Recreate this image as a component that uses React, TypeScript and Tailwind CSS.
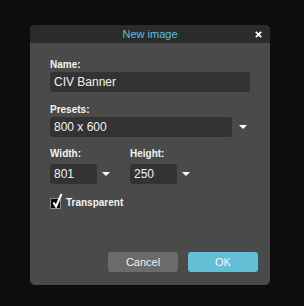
import React from 'react'

const font = { fontFamily: '"Liberation Sans", Arial, sans-serif' }

const Arrow: React.FC<{ className?: string }> = ({ className }) => (
  <svg width="8" height="4" viewBox="0 0 8 4" className={className}>
    <path d="M0 0 H8 L4 4 Z" fill="#ffffff" />
  </svg>
)

const Field: React.FC<{ value: string; className?: string }> = ({ value, className }) => (
  <div className={`h-[20px] rounded-[3px] bg-[#333333] pl-[4px] text-[12px] leading-[20px] text-[#f2f2f2] ${className ?? ''}`}>
    {value}
  </div>
)

const Label: React.FC<{ children: React.ReactNode; className?: string }> = ({ children, className }) => (
  <div className={`text-[10px] font-bold leading-[12px] text-[#f4f4f4] ${className ?? ''}`}>{children}</div>
)

const App: React.FC = () => {
  return (
    <div className="h-[306px] w-[304px] bg-[#0e0e0e] pl-[30px] pt-[25px]" style={font}>
      <div className="flex h-[260px] w-[240px] flex-col overflow-hidden rounded-[5px] bg-[#4a4a4a]">
        <div className="relative flex h-[18px] items-center justify-center bg-[#2b2b2b]">
          <span className="text-[11px] leading-[18px] text-[#5bc0de]">New image</span>
          <svg width="7" height="7" viewBox="0 0 7 7" className="absolute right-[8px] top-[6px]">
            <path d="M0.8 0.8 L6.2 6.2 M6.2 0.8 L0.8 6.2" stroke="#ffffff" strokeWidth="1.8" />
          </svg>
        </div>

        <div className="flex flex-1 flex-col px-[20px] pt-[16px]">
          <Label className="mb-[1px]">Name:</Label>
          <Field value="CIV Banner" />

          <Label className="mb-[1px] mt-[12px]">Presets:</Label>
          <div className="flex items-center">
            <Field value="800 x 600" className="w-[182px]" />
            <Arrow className="ml-[7px]" />
          </div>

          <div className="mt-[11px] grid grid-cols-[80px_80px]">
            <div>
              <Label className="mb-[4px]">Width:</Label>
              <div className="flex items-center">
                <Field value="801" className="w-[47px]" />
                <Arrow className="ml-[5px]" />
              </div>
            </div>
            <div>
              <Label className="mb-[4px]">Height:</Label>
              <div className="flex items-center">
                <Field value="250" className="w-[47px]" />
                <Arrow className="ml-[5px]" />
              </div>
            </div>
          </div>

          <div className="mt-[13px] flex h-[12px] items-center">
            <div className="relative h-[11px] w-[11px] border border-[#8a8a8a] bg-[#0a0a0a]">
              <svg width="12" height="16" viewBox="0 0 12 16" className="absolute left-[1px] top-[-6px]">
                <path d="M1.5 9.5 L4 13.5 L9.5 1" stroke="#ffffff" strokeWidth="2" fill="none" />
              </svg>
            </div>
            <span className="ml-[5px] text-[10px] font-bold leading-[12px] text-[#f4f4f4]">Transparent</span>
          </div>

          <div className="-mr-[8px] mb-[13px] mt-auto flex justify-end gap-[10px]">
            <button className="h-[20px] w-[70px] rounded-[3px] bg-[#6b6b6b] text-[11px] text-[#f0f0f0]">Cancel</button>
            <button className="h-[20px] w-[70px] rounded-[3px] bg-[#62bfd6] text-[11px] text-[#f8f8f8]">OK</button>
          </div>
        </div>
      </div>
    </div>
  )
}

export default App
